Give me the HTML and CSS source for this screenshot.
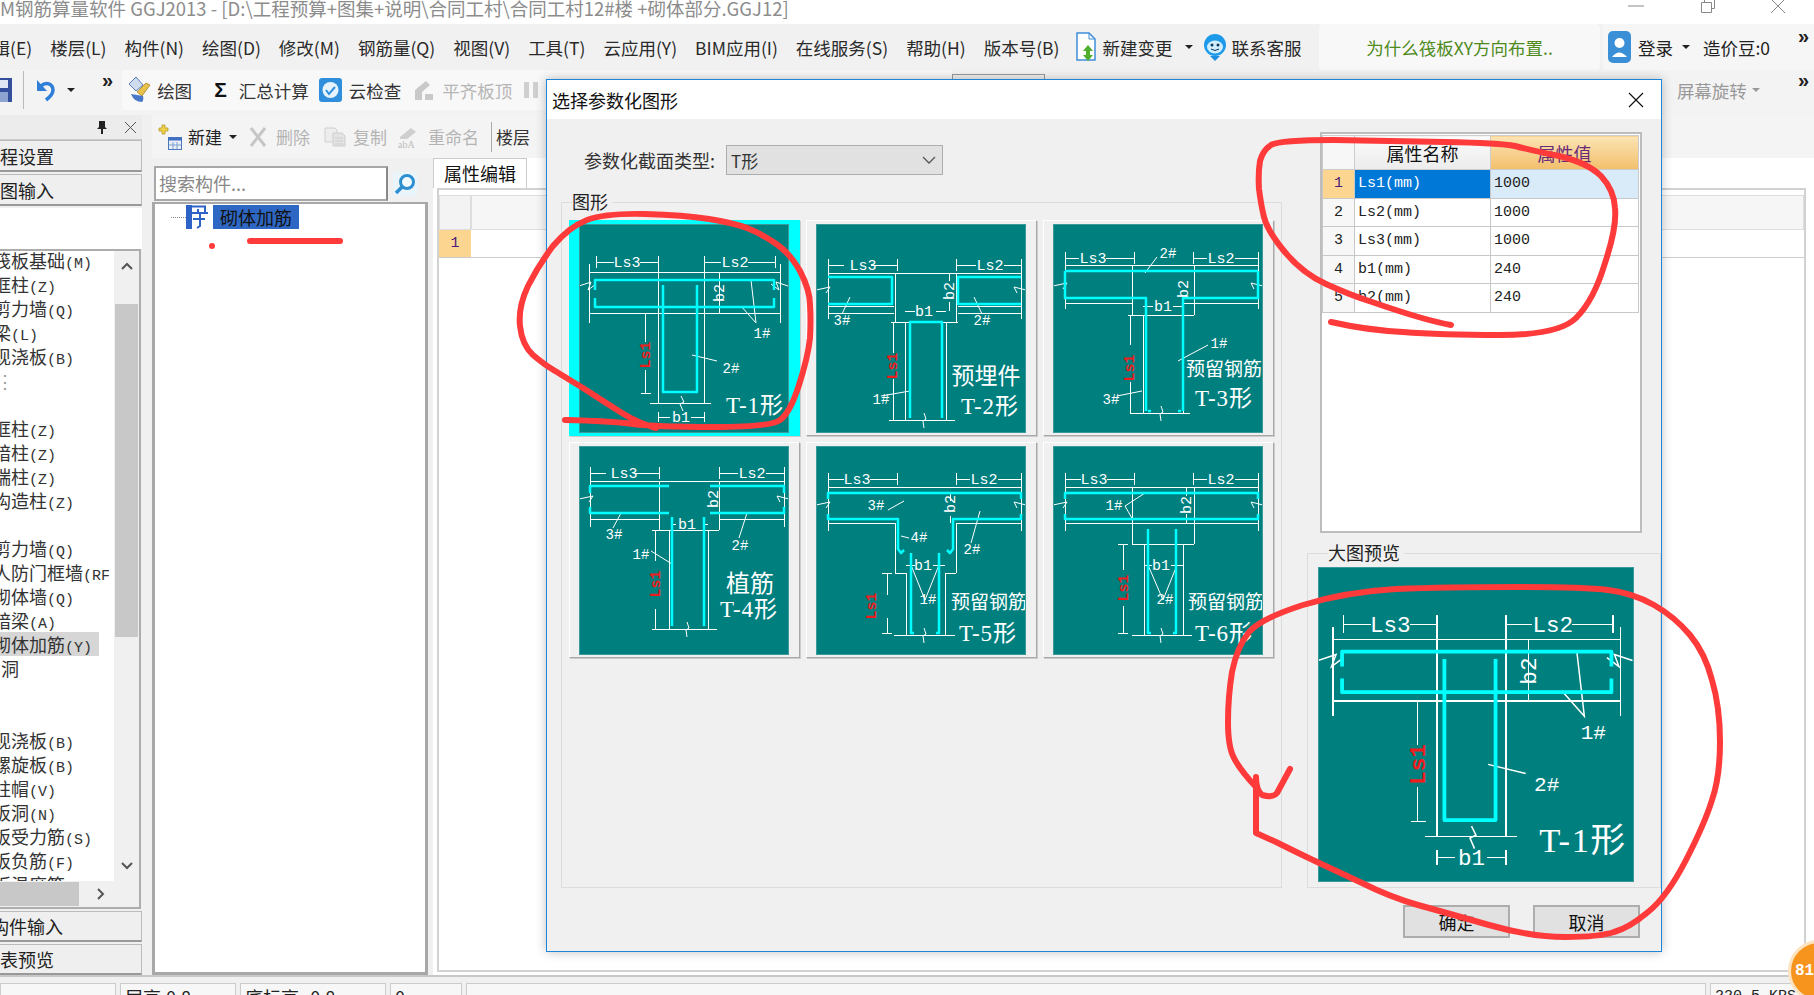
FILE: index.html
```html
<!DOCTYPE html>
<html lang="zh-CN">
<head>
<meta charset="utf-8">
<title>GGJ2013</title>
<link rel="stylesheet" href="styles.css">
</head>
<body>
<svg class="defs" width="0" height="0" aria-hidden="true">
  <defs>
    <symbol id="t1" viewBox="0 0 210 209">
      <path class="w" d="M17 32v12M79 32v12M17 38h18M61 38h18M125 32v12M196 32v12M125 38h17M169 38h27M10 40v59M201 40v59M10 48h191M10 89h191M79 38v141M125 38v141M71 179h61M140 48v41M66 89v29M66 146v23M62 169h10M79 188v10M125 188v10M79 193h12M112 193h13"/>
      <path class="d" d="M0 62l12-4-3 8 8-6M209 62l-12-4 3 8-8-6M172 56l5 43-15-17M113 131l25 6M102 172l3 6-4 2 3 7"/>
      <path class="c" d="M16 66V56H195V66M16 74V83H195V74M84 61V168H118V61"/>
      <text class="l" x="48" y="43">Ls3</text><text class="l" x="156" y="43">Ls2</text>
      <text class="l" x="102" y="198">b1</text><text class="s" x="183" y="114">1#</text><text class="s" x="152" y="149">2#</text>
      <text class="l" transform="translate(145 69) rotate(-90)">b2</text>
      <text class="r" transform="translate(71 131) rotate(-90)">Ls1</text>
      <text class="big" x="176" y="189">T-1形</text>
    </symbol>
    <symbol id="t2" viewBox="0 0 210 209">
      <path class="w" d="M12 35v12M81 35v12M12 41h16M55 41h26M140 35v12M205 35v12M140 41h20M188 41h17M12 47v48M205 47v48M12 49h193M12 89h66M142 89h63M12 82h66M142 82h63M79 49v50M140 49v50M75 98h67M89 98v98M130 98v98M73 196h66M89 87h10M120 87h10M133 49v8M133 78v9M77 99v30M77 155v41"/>
      <path class="d" d="M0 66l14-3-4 6M210 66l-12-3 3 6M108 189l2 6-3 2 1 7M65 172l29-5M26 90l8-17M166 90l-8-17"/>
      <path class="c" d="M12 53H76V80H12M205 53H142V80H205M94 194V98H126V194"/>
      <text class="l" x="47" y="46">Ls3</text><text class="l" x="174" y="46">Ls2</text><text class="l" x="108" y="92">b1</text>
      <text class="s" x="26" y="101">3#</text><text class="s" x="166" y="101">2#</text><text class="s" x="65" y="180">1#</text>
      <text class="l" transform="translate(138 67) rotate(-90)">b2</text>
      <text class="r" transform="translate(81 142) rotate(-90)">Ls1</text>
      <text class="cn" x="170" y="160">预埋件</text><text class="big" x="174" y="190">T-2形</text>
    </symbol>
    <symbol id="t3" viewBox="0 0 210 209">
      <path class="w" d="M12 28v12M81 28v12M12 34h14M53 34h28M140 28v12M205 28v12M140 34h14M182 34h23M12 38v47M205 38v47M12 41h193M12 79h67M130 79h75M79 41v50M141 41v50M75 91h66M90 91v98M130 91v98M77 189h60M90 82h10M120 82h10M77 91v30M77 158v31"/>
      <path class="d" d="M0 62l14-3-4 6M210 62l-12-3 3 6M108 182l2 6-3 2 1 7M92 49l12-16M125 137l30-16M64 172l25-5"/>
      <path class="c" d="M12 47H205M12 47V74H93V187M205 47V74H130V187M95 187H98M125 187H128"/>
      <text class="l" x="40" y="39">Ls3</text><text class="l" x="168" y="39">Ls2</text><text class="l" x="110" y="87">b1</text>
      <text class="s" x="115" y="34">2#</text><text class="s" x="166" y="124">1#</text><text class="s" x="58" y="180">3#</text>
      <text class="l" transform="translate(135 65) rotate(-90)">b2</text>
      <text class="r" transform="translate(81 144) rotate(-90)">Ls1</text>
      <text class="cn2" x="171" y="152">预留钢筋</text><text class="big" x="171" y="182">T-3形</text>
    </symbol>
    <symbol id="t4" viewBox="0 0 210 209">
      <path class="w" d="M11 21v12M80 21v12M11 27h16M55 27h25M140 21v12M205 21v12M140 27h19M187 27h18M11 33v48M205 33v48M11 35h194M11 73h69M140 73h65M80 35v49M140 35v49M73 84h67M90 84v99M129 84v99M73 183h65M92 78h5M124 78h5M76 85v30M76 163v20"/>
      <path class="d" d="M0 53l14-3-4 6M210 53l-12-3 3 6M108 176l2 6-3 2 1 7M34 82l8-15M160 92l8-25M72 105l21 13"/>
      <path class="c" d="M11 47V40H90M11 61V67H90M205 47V40H131M205 61V67H131M93 71V180M125 71V180"/>
      <text class="l" x="45" y="32">Ls3</text><text class="l" x="173" y="32">Ls2</text><text class="l" x="108" y="83">b1</text>
      <text class="s" x="35" y="93">3#</text><text class="s" x="161" y="104">2#</text><text class="s" x="62" y="113">1#</text>
      <text class="l" transform="translate(139 53) rotate(-90)">b2</text>
      <text class="r" transform="translate(81 138) rotate(-90)">Ls1</text>
      <text class="cn3" x="171" y="146">植筋</text><text class="big" x="170" y="171">T-4形</text>
    </symbol>
    <symbol id="t5" viewBox="0 0 210 209">
      <path class="w" d="M12 27v12M81 27v12M12 33h16M54 33h27M140 27v12M205 27v12M140 33h14M182 33h23M12 37v48M205 37v48M12 41h193M12 77h67M140 77h65M79 77v50M140 77v50M79 127h11M129 127h11M90 127v62M129 127v62M78 189h61M66 127h10M71 127v22M71 172v15M66 187h10M90 119h9M117 119h12M134 47v8M134 70v7"/>
      <path class="d" d="M109 154l-14-35M109 154l14-35M72 64l16-9M0 59l14-3-4 6M210 59l-12-3 3 6M108 182l2 6-3 2 1 7M85 90l8 2M155 97l9-32"/>
      <path class="c" d="M12 53V47H205V53M12 68V73H82V103l3 4 3-3M205 68V73H137V103l-3 4-3-3M95 107V187H98M123 107V187H120"/>
      <text class="l" x="41" y="38">Ls3</text><text class="l" x="168" y="38">Ls2</text><text class="l" x="107" y="124">b1</text>
      <text class="s" x="60" y="64">3#</text><text class="s" x="103" y="96">4#</text><text class="s" x="156" y="108">2#</text><text class="s" x="112" y="158">1#</text>
      <text class="l" transform="translate(139 58) rotate(-90)">b2</text>
      <text class="r" transform="translate(60 160) rotate(-90)">Ls1</text>
      <text class="cn2" x="173" y="163">预留钢筋</text><text class="big" x="172" y="195">T-5形</text>
    </symbol>
    <symbol id="t6" viewBox="0 0 210 209">
      <path class="w" d="M12 27v12M81 27v12M12 33h16M54 33h27M140 27v12M205 27v12M140 33h14M182 33h23M12 37v48M205 37v48M12 41h193M12 77h193M79 41v57M141 41v57M79 98h62M91 98v91M130 98v91M79 189h60M65 98h10M70 98v26M70 160v27M65 187h10M91 119h8M118 119h12M133 41v9M133 68v9"/>
      <path class="d" d="M110 154l-15-35M110 154l14-35M72 60l20-13M72 60l8 14M0 59l14-3-4 6M210 59l-12-3 3 6M108 182l2 6-3 2 1 7"/>
      <path class="c" d="M12 53V47H205V53M12 68V73H205V68M95 88V83M95 83V187H98M123 83V187H120"/>
      <text class="l" x="41" y="38">Ls3</text><text class="l" x="168" y="38">Ls2</text><text class="l" x="108" y="124">b1</text>
      <text class="s" x="61" y="64">1#</text><text class="s" x="112" y="158">2#</text>
      <text class="l" transform="translate(138 59) rotate(-90)">b2</text>
      <text class="r" transform="translate(75 142) rotate(-90)">Ls1</text>
      <text class="cn2" x="173" y="163">预留钢筋</text><text class="big" x="171" y="195">T-6形</text>
    </symbol>
  </defs>
</svg>

<div class="app">
  <header class="titlebar">
    <div class="title-text">M钢筋算量软件 GGJ2013 - [D:\工程预算+图集+说明\合同工村\合同工村12#楼 +砌体部分.GGJ12]</div>
    <div class="win-btns">
      <svg class="win-min" width="16" height="2"><path d="M0 1h16" stroke="#888"/></svg>
      <svg class="win-max" width="15" height="14"><path d="M.5 3.5h10v10H.5zM3.5 3V.5h10v9H11" fill="none" stroke="#888"/></svg>
      <svg class="win-close" width="16" height="14"><path d="M1 0l14 14M15 0L1 14" stroke="#888"/></svg>
    </div>
  </header>

  <nav class="menubar">
    <span class="m m-first">编辑(E)</span><span class="m">楼层(L)</span><span class="m">构件(N)</span><span class="m">绘图(D)</span><span class="m">修改(M)</span><span class="m">钢筋量(Q)</span><span class="m">视图(V)</span><span class="m">工具(T)</span><span class="m">云应用(Y)</span><span class="m">BIM应用(I)</span><span class="m">在线服务(S)</span><span class="m">帮助(H)</span><span class="m">版本号(B)</span>
    <span class="m m-icon m-doc">
      <svg width="23" height="30" viewBox="0 0 23 30"><path d="M2 1h12l6 6v21H2z" fill="#fff" stroke="#3f8fd8" stroke-width="1.5"/><path d="M14 1v6h6" fill="none" stroke="#3f8fd8"/><path d="M13 13l5 6h-3v4h3l-5 6-5-6h3v-4H8z" fill="#4fae2e"/></svg>
      新建变更<i class="caret"></i>
    </span>
    <span class="m m-icon">
      <svg width="24" height="30" viewBox="0 0 24 30"><path d="M7 24l5 5 5-5z" fill="#1e8fe0"/><circle cx="12" cy="13" r="11" fill="#1e9aea"/><ellipse cx="12" cy="15" rx="8" ry="6.500" fill="#cfeeff"/><circle cx="9" cy="13" r="1.500" fill="#135"/><circle cx="15" cy="13" r="1.500" fill="#135"/><path d="M8 17q4 3 8 0" fill="none" stroke="#135"/></svg>
      联系客服
    </span>
    <div class="news">为什么筏板XY方向布置..</div>
    <div class="login">
      <svg width="23" height="32" viewBox="0 0 23 32"><rect x="0" y="0" width="23" height="32" rx="5" fill="#3a8fd6"/><circle cx="11.500" cy="12" r="5" fill="#fff"/><path d="M4 26q7-9 15 0z" fill="#fff"/></svg>
      <span class="login-name">登录</span><i class="caret"></i><span class="beans">造价豆:0</span>
      <span class="chev">»</span>
    </div>
  </nav>

  <div class="toolbar">
    <div class="tb-left">
      <svg class="save" width="12" height="26" viewBox="0 0 12 26"><path d="M-8 1h20v24H-8z" fill="#34509c"/><rect x="-2" y="3" width="10" height="8" fill="#dfe7f5"/><rect x="-2" y="15" width="10" height="10" fill="#8ea4d0"/></svg>
      <span class="tb-sep"></span>
      <svg class="undo" width="20" height="26" viewBox="0 0 20 26"><path d="M2 3v11h10z" fill="#2f7fd8"/><path d="M6 9C11 4 18 7 18 13c0 4-3 7-7 10" fill="none" stroke="#2f7fd8" stroke-width="3.500"/></svg>
      <i class="caret caret-undo"></i>
      <span class="chev chev-tb">»</span>
      <div class="tb-group">
        <span class="ti"><svg width="25" height="28" viewBox="0 0 25 28"><path d="M2 8l7-7 7 8-7 6z" fill="#cfdcf0" stroke="#5a7db5"/><path d="M10 16l9-9 4 2-8 11z" fill="#e8c04a" stroke="#a07a1c" stroke-width=".7"/><path d="M4 18q3 8 11 8 2-2 1-6" fill="#4a78c8"/></svg>绘图</span>
        <span class="ti ti-sum"><b>Σ</b>汇总计算</span>
        <span class="ti ti-cloud"><svg width="23" height="24" viewBox="0 0 23 24"><rect width="23" height="24" rx="3" fill="#2f8fdc"/><circle cx="11.500" cy="12" r="8" fill="#e6f3fd"/><path d="M7 12l3 4 6-7" fill="none" stroke="#2f8fdc" stroke-width="2"/></svg>云检查</span>
        <span class="ti ti-gray"><svg width="25" height="24" viewBox="0 0 25 24"><path d="M3 22V12L14 3l4 4-8 7v8zM13 22v-6h8v6z" fill="#c9c9c9"/></svg>平齐板顶</span>
        <svg class="ti-gray-icon" width="20" height="24" viewBox="0 0 20 24"><path d="M2 4h5v16H2zM11 4h5v16h-5z" fill="#cfcfcf"/></svg>
      </div>
    </div>
    <div class="combo"></div>
    <div class="tb-right"><span class="rotate">屏幕旋转</span><i class="caret caret-gray"></i><span class="chev">»</span></div>
  </div>

  <div class="work">
    <aside class="side">
      <div class="side-head">
        <svg width="12" height="14" viewBox="0 0 12 14"><path d="M3 1h6v6l2 2H1l2-2zM5 9h2v5H5z" fill="#222"/></svg>
        <svg width="13" height="13" viewBox="0 0 13 13"><path d="M1 1l11 11M12 1L1 12" stroke="#555"/></svg>
      </div>
      <div class="side-btn">程设置</div>
      <div class="side-btn">图输入</div>
      <div class="side-gap"></div>
      <div class="list-box">
        <div class="list-main">
          <ul class="list">
            <li>筏板基础<span>(M)</span></li>
            <li>框柱<span>(Z)</span></li>
            <li>剪力墙<span>(Q)</span></li>
            <li>梁<span>(L)</span></li>
            <li>现浇板<span>(B)</span></li>
            <li class="dots">⋮</li>
            <li></li>
            <li>框柱<span>(Z)</span></li>
            <li>暗柱<span>(Z)</span></li>
            <li>端柱<span>(Z)</span></li>
            <li>构造柱<span>(Z)</span></li>
            <li></li>
            <li>剪力墙<span>(Q)</span></li>
            <li>人防门框墙<span>(RF</span></li>
            <li>砌体墙<span>(Q)</span></li>
            <li>暗梁<span>(A)</span></li>
            <li class="on">砌体加筋<span>(Y)</span></li>
            <li class="hole">洞</li>
            <li></li>
            <li></li>
            <li>现浇板<span>(B)</span></li>
            <li>螺旋板<span>(B)</span></li>
            <li>柱帽<span>(V)</span></li>
            <li>板洞<span>(N)</span></li>
            <li>板受力筋<span>(S)</span></li>
            <li>板负筋<span>(F)</span></li>
            <li>板温度筋<span>(W)</span></li>
          </ul>
          <div class="vscroll">
            <svg width="14" height="10" viewBox="0 0 14 10"><path d="M2 8l5-5 5 5" fill="none" stroke="#555" stroke-width="2"/></svg>
            <div class="vtrack"><div class="vthumb"></div></div>
            <svg width="14" height="10" viewBox="0 0 14 10"><path d="M2 2l5 5 5-5" fill="none" stroke="#555" stroke-width="2"/></svg>
          </div>
        </div>
        <div class="hscroll"><div class="hthumb"></div><svg width="10" height="14" viewBox="0 0 10 14"><path d="M2 2l5 5-5 5" fill="none" stroke="#555" stroke-width="2"/></svg></div>
      </div>
      <div class="side-btn side-btn-low side-btn-a">构件输入</div>
      <div class="side-btn side-btn-low">表预览</div>
    </aside>

    <main class="main">
      <div class="toolrow">
        <span class="tr tr-new"><svg width="24" height="26" viewBox="0 0 24 26"><path d="M4 1h3v3h3v3H7v3H4V7H1V4h3z" fill="#efd24a" stroke="#b09320" stroke-width=".7"/><rect x="10.500" y="13.500" width="13" height="12" fill="#e8eef8" stroke="#4a78c0"/><path d="M10 15h14" stroke="#3f6fc0" stroke-width="3"/><path d="M15 18v7M19 18v7M11 21h12" stroke="#7f9fd0"/></svg>新建<i class="caret"></i></span>
        <span class="tr tr-off tr-del"><svg width="18" height="20" viewBox="0 0 18 20"><path d="M2 1l14 18M16 1L2 19" stroke="#c6c6c6" stroke-width="3"/></svg>删除</span>
        <span class="tr tr-off"><svg width="23" height="20" viewBox="0 0 23 20"><path d="M1 1h10l2 2v12H1z" fill="#ededed" stroke="#d0d0d0"/><path d="M9 6h9l3 3v10H9z" fill="#e4e4e4" stroke="#ccc"/><path d="M11 11h8M11 14h8M11 17h8" stroke="#ccc"/></svg>复制</span>
        <span class="tr tr-off"><svg class="rename" width="25" height="24" viewBox="0 0 25 24"><path d="M3 12L14 3l5 4-9 7H3z" fill="#cfcfcf"/><text x="1" y="23">abA</text></svg>重命名</span>
        <span class="tr-sep"></span>
        <span class="tr tr-floor">楼层</span>
      </div>
      <div class="split">
        <section class="mid">
          <div class="search">
            <div class="search-box">搜索构件...</div>
            <svg width="24" height="24" viewBox="0 0 24 24"><rect width="24" height="24" fill="#eaf4fb"/><circle cx="14" cy="10" r="6.500" fill="#f4fbff" stroke="#2e8fd0" stroke-width="3"/><path d="M9 15l-6 6" stroke="#2e8fd0" stroke-width="3.500"/></svg>
          </div>
          <div class="tree">
            <div class="tree-row">
              <span class="tree-dots"></span>
              <svg width="22" height="24" viewBox="0 0 22 24"><rect x="0" y="0" width="6" height="24" fill="#2f62c6"/><path d="M3 1.500h16v6M6 8h16M12 4v3M14 8v13l-3 2M7 14h12" stroke="#2f62c6" stroke-width="2" fill="none"/></svg>
              <span class="tree-label">砌体加筋</span>
            </div>
          </div>
        </section>
        <section class="props">
          <div class="tabs"><div class="tab">属性编辑</div></div>
          <div class="props-panel">
            <div class="grid-head"><span class="gh0"></span><span class="gh1"></span></div>
            <div class="grid-row"><span class="gr0">1</span></div>
          </div>
        </section>
      </div>
    </main>
  </div>

  <footer class="status">
    <span class="st st1"></span><span class="st st2">层高:0.8m</span><span class="st st3">底标高:-0.8m</span><span class="st st4">0</span><span class="st st5"></span><span class="st st6">220.5 KPS</span>
  </footer>

  <section class="dialog">
    <div class="dlg-title"><span>选择参数化图形</span>
      <svg width="16" height="16" viewBox="0 0 16 16"><path d="M1 1l14 14M15 1L1 15" stroke="#111" stroke-width="1.200"/></svg>
    </div>
    <div class="dlg-body">
      <div class="dlg-left">
        <div class="form-row">
          <label>参数化截面类型:</label>
          <div class="select"><span>T形</span><svg width="14" height="9" viewBox="0 0 14 9"><path d="M1 1l6 6 6-6" fill="none" stroke="#555" stroke-width="1.300"/></svg></div>
        </div>
        <div class="group group-shapes">
          <div class="legend">图形</div>
          <div class="cards">
            <div class="card sel"><svg class="pic"><use href="#t1"/></svg></div>
            <div class="card"><svg class="pic"><use href="#t2"/></svg></div>
            <div class="card"><svg class="pic"><use href="#t3"/></svg></div>
            <div class="card"><svg class="pic"><use href="#t4"/></svg></div>
            <div class="card"><svg class="pic"><use href="#t5"/></svg></div>
            <div class="card"><svg class="pic"><use href="#t6"/></svg></div>
          </div>
        </div>
      </div>
      <div class="dlg-right">
        <div class="ptable-box">
          <table class="ptable">
            <thead><tr><th class="c0"></th><th class="c1">属性名称</th><th class="c2">属性值</th></tr></thead>
            <tbody>
              <tr class="cur"><td class="c0">1</td><td class="c1">Ls1(mm)</td><td class="c2">1000</td></tr>
              <tr><td class="c0">2</td><td class="c1">Ls2(mm)</td><td class="c2">1000</td></tr>
              <tr><td class="c0">3</td><td class="c1">Ls3(mm)</td><td class="c2">1000</td></tr>
              <tr><td class="c0">4</td><td class="c1">b1(mm)</td><td class="c2">240</td></tr>
              <tr><td class="c0">5</td><td class="c1">b2(mm)</td><td class="c2">240</td></tr>
            </tbody>
          </table>
        </div>
        <div class="group group-preview">
          <div class="legend">大图预览</div>
          <svg class="pic pic-big"><use href="#t1"/></svg>
        </div>
      </div>
    </div>
    <div class="dlg-foot"><button class="btn">确定</button><button class="btn">取消</button></div>
  </section>

  <div class="badge">81</div>

  <svg class="ink" width="1814" height="995" viewBox="0 0 1814 995" aria-hidden="true">
    <path d="M250 241H340"/>
    <circle cx="212" cy="246" r="3"/>
    <path d="M565 420Q610 421 633 424Q656 427 713 427Q771 427 780 420Q790 413 799 385Q808 357 810 338Q811 320 810 305Q810 290 800 271Q790 253 775 243Q760 233 747 228Q734 223 709 219Q684 215 645 214Q606 213 587 220Q569 227 553 246Q538 266 528 286Q518 307 520 326Q522 345 533 355Q545 365 552 369Q560 374 583 388Q606 403 622 413Q638 423 656 428"/>
    <path d="M1331 322Q1366 330 1403 332Q1440 335 1500 335Q1559 335 1576 318Q1594 300 1605 263Q1617 227 1615 208Q1614 190 1601 176Q1588 163 1559 156Q1530 150 1515 146Q1500 143 1445 142Q1390 141 1334 140Q1279 140 1271 145Q1263 150 1260 161Q1258 173 1259 189Q1261 205 1264 217Q1267 230 1284 251Q1302 273 1326 284Q1350 295 1372 302Q1395 310 1415 316Q1435 322 1451 325"/>
    <path d="M1290 769L1277 793Q1273 798 1262 795Q1256 790 1256 777L1256 833 1276 842Q1296 852 1315 861Q1334 870 1362 883Q1390 897 1418 905Q1447 913 1489 925Q1531 937 1565 937Q1599 937 1614 932Q1629 928 1648 912Q1667 897 1686 860Q1705 823 1712 800Q1720 777 1720 742Q1720 707 1712 680Q1705 653 1690 635Q1675 617 1654 605Q1633 593 1608 590Q1584 587 1515 587Q1447 587 1396 589Q1345 592 1303 605Q1262 618 1249 632Q1237 647 1232 672Q1228 697 1228 722Q1228 747 1234 758Q1240 770 1256 787"/>
  </svg>
</div>
</body>
</html>
```
FILE: styles.css
```css
* { box-sizing: border-box; }
html, body { margin: 0; padding: 0; }
body { font-family: "Noto Sans CJK SC", "Liberation Sans", sans-serif; color: #222; overflow: hidden; }
.defs { position: absolute; }
.app { width: 1814px; height: 995px; position: relative; overflow: hidden; display: flex; flex-direction: column; background: #f0f0f0; }

.titlebar { height: 24px; flex: none; background: #fff; display: flex; justify-content: space-between; overflow: hidden; }
.title-text { font-size: 18.500px; line-height: 16px; color: #8c8c8c; white-space: nowrap; }
.win-btns { position: relative; display: flex; align-items: flex-start; padding-right: 28px; }
.win-min { margin-top: 5px; margin-right: 57px; }
.win-max { margin-right: 54px; margin-top: -1px; }
.win-close { margin-top: -1px; }

.menubar { height: 46px; flex: none; background: #f1f1f1; display: flex; align-items: center; font-size: 17.500px; white-space: nowrap; }
.m { margin-right: 18px; color: #2a2a2a; }
.m-first { margin-left: -25px; }
.m-icon { display: flex; align-items: center; gap: 5px; margin-right: 10px; }
.m-doc { margin-left: -3px; }
.caret { display: inline-block; width: 0; height: 0; border: 4px solid transparent; border-top: 4px solid #222; border-bottom: 0; }
.m-icon .caret { margin-left: 7px; }
.news { width: 281px; height: 46px; margin-left: auto; background: #f8f8f8; border-radius: 4px; color: #4e8a1c; display: flex; align-items: center; justify-content: center; }
.login { width: 211px; flex: none; display: flex; align-items: center; margin-left: 3px; height: 46px; padding-left: 5px; background: #f6f6f6; position: relative; }
.login-name { margin-left: 7px; }
.login .caret { margin-left: 9px; }
.beans { margin-left: 13px; }
.chev { font-size: 20px; font-weight: 700; line-height: 1; color: #222; font-family: "Liberation Sans", sans-serif; }
.login .chev { position: absolute; right: 5px; top: 2px; }

.toolbar { height: 45px; flex: none; display: flex; align-items: flex-start; background: #f3f3f3; font-size: 17.500px; position: relative; }
.tb-left { width: 952px; flex: none; height: 45px; display: flex; align-items: center; padding-bottom: 5px; }
.save { flex: none; }
.tb-sep { width: 1px; height: 38px; background: #bbb; margin-left: 11px; }
.undo { margin-left: 11px; flex: none; }
.caret-undo { margin-left: 12px; }
.chev-tb { margin-left: 27px; margin-top: -20px; }
.tb-group { display: flex; align-items: center; height: 40px; margin-left: 9px; background: #f8f8f8; padding-left: 5px; flex: 1; overflow: hidden; }
.ti { display: flex; align-items: center; gap: 5px; margin-right: 22px; color: #333; white-space: nowrap; flex: none; }
.ti-sum { gap: 12px; margin-right: 10px; }
.ti-sum b { font-size: 21px; font-family: "Liberation Sans", sans-serif; color: #111; }
.ti-cloud { gap: 7px; margin-right: 11px; }
.ti-gray { color: #b5b5b5; margin-right: 10px; }
.ti-gray-icon { flex: none; }
.combo { width: 93px; height: 40px; border: 1px solid #999; background: #f0f0f0; margin-top: 4px; }
.tb-right { margin-left: auto; height: 45px; display: flex; align-items: center; padding: 0 5px 5px 0; color: #999; }
.caret-gray { border-top-color: #999; margin-left: 5px; margin-right: 38px; }
.tb-right .chev { margin-top: -20px; }

.work { flex: 1; min-height: 0; display: flex; }
.side { width: 152px; flex: none; display: flex; flex-direction: column; font-size: 18px; }
.side-head { height: 25px; flex: none; display: flex; justify-content: flex-end; align-items: center; gap: 16px; padding-right: 5px; background: #ececec; border-bottom: 1px solid #ccc; width: 142px; }
.side-btn { width: 142px; height: 32px; flex: none; margin-bottom: 2px; background: #efefef; border: 1px solid #bbb; border-bottom: 2px solid #999; border-left: 0; display: flex; align-items: center; line-height: 1; overflow: hidden; }
.side-gap { flex: none; height: 41px; background: #fff; width: 142px; }
.list-box { width: 141px; height: 660px; flex: none; border: 2px solid #adadad; border-left: 0; background: #f0f0f0; display: flex; flex-direction: column; }
.list-main { flex: 1; min-height: 0; display: flex; background: #fff; }
.list { list-style: none; margin: -3px 0 0; padding: 0; flex: 1; min-width: 0; overflow: hidden; font-size: 18px; line-height: 24px; white-space: nowrap; }
.list li { height: 24px; text-indent: -7px; color: #333; }
.list li span { font-family: "Liberation Mono", monospace; font-size: 15px; }
.list li.on { background: #d6d6d6; width: 99px; }
.list li.hole { text-indent: 1px; }
.list li.dots { text-indent: -4px; color: #999; }
.vscroll { width: 25px; flex: none; background: #f0f0f0; display: flex; flex-direction: column; align-items: center; padding-top: 10px; padding-bottom: 10px; }
.vtrack { flex: 1; width: 100%; padding-top: 33px; }
.vthumb { height: 333px; background: #c8c8c8; width: 23px; margin-left: 1px; }
.hscroll { height: 26px; flex: none; display: flex; align-items: center; background: #f0f0f0; }
.hthumb { width: 79px; height: 24px; background: #c8c8c8; margin-right: 17px; }
.side-btn-low { margin-bottom: 0; margin-top: 2px; height: 31px; }
.side-btn-a { text-indent: -9px; }

.main { flex: 1; min-width: 0; display: flex; flex-direction: column; }
.toolrow { height: 43px; flex: none; display: flex; align-items: center; padding-left: 6px; font-size: 17px; background: #f4f4f4; white-space: nowrap; }
.tr { display: flex; align-items: center; gap: 6px; margin-right: 10px; }
.tr-new .caret { margin-left: 1px; }
.tr-new { margin-right: 12px; }
.tr-off { color: #b4b4b4; }
.tr-del { gap: 9px; margin-right: 14px; }
.rename text { font: 10px "Liberation Serif", serif; fill: #bdbdbd; }
.tr-sep { width: 1px; height: 30px; background: #aaa; margin-left: 2px; margin-right: 4px; }
.tr-floor { color: #333; }
.split { flex: 1; min-height: 0; display: flex; }
.mid { width: 276px; flex: none; display: flex; flex-direction: column; padding-top: 7px; }
.search { display: flex; align-items: center; height: 37px; flex: none; gap: 5px; padding-left: 2px; }
.search-box { width: 234px; height: 35px; background: #fff; border: 2px solid #a8a8a8; border-right-color: #888; font-size: 18px; color: #888; padding-left: 3px; line-height: 30px; }
.tree { flex: 1; background: #fff; border: 3px solid #a8a8a8; border-top-width: 2px; }
.tree-row { display: flex; align-items: center; height: 24px; padding-left: 16px; margin-top: 1px; }
.tree-dots { width: 15px; border-top: 1px dotted #888; }
.tree-row svg { flex: none; }
.tree-label { margin-left: 5px; background: #2f68c4; color: #111; font-size: 18px; line-height: 24px; padding: 0 7px; width: 86px; white-space: nowrap; }

.props { flex: 1; min-width: 0; display: flex; flex-direction: column; margin-left: 5px; background: #fff; }
.tabs { height: 30px; flex: none; background: #fff; }
.tab { width: 94px; height: 30px; background: #fff; border: 1px solid #ccc; border-bottom: 0; font-size: 18px; text-align: center; line-height: 28px; color: #111; }
.props-panel { flex: 1; margin: 0 8px 3px 4px; border: 2px solid #d2d2d2; padding-top: 5px; background: #fff; }
.grid-head { display: flex; height: 35px; }
.gh0 { width: 32px; background: #f3f3f3; border: 1px solid #ddd; }
.gh1 { flex: 1; background: #f6f6f6; border: 1px solid #ddd; }
.grid-row { display: flex; height: 28px; border-bottom: 1px solid #ccc; }
.gr0 { width: 32px; background: #fcd690; text-align: center; font: 15px/28px "Liberation Mono", monospace; color: #4b1a7a; }

.status { height: 20px; flex: none; display: flex; gap: 4px; padding-top: 6px; background: #f0f0f0; border-top: 2px solid #c8c8c8; overflow: hidden; font-size: 18px; }
.st { height: 30px; background: #f7f7f7; border: 1px solid #ccc; padding: 0 4px; line-height: 26px; white-space: nowrap; flex: none; }
.st1 { width: 116px; }
.st2 { width: 116px; }
.st3 { width: 146px; }
.st4 { width: 72px; }
.st5 { width: 1240px; }
.st6 { width: 90px; font-family: "Liberation Mono", monospace; font-size: 15px; }

.dialog { position: absolute; left: 546px; top: 79px; width: 1116px; height: 873px; background: #f0f0f0; border: 1px solid #1e86d8; box-shadow: 0 0 10px rgba(0,0,0,.25); display: flex; flex-direction: column; }
.dlg-title { height: 39px; flex: none; background: #fff; display: flex; justify-content: space-between; align-items: center; padding: 0 17px 0 5px; font-size: 18px; color: #111; }
.dlg-body { flex: 1; min-height: 0; display: flex; gap: 25px; padding-left: 14px; }
.dlg-left { width: 721px; flex: none; }
.form-row { height: 30px; margin-top: 26px; display: flex; align-items: center; padding-left: 23px; font-size: 18px; color: #333; }
.form-row label { width: 142px; flex: none; white-space: nowrap; }
.select { width: 217px; height: 30px; background: #e1e1e1; border: 1px solid #adadad; display: flex; justify-content: space-between; align-items: center; padding: 0 6px 0 4px; font-size: 17px; }
.group { border: 1px solid #dcdcdc; position: relative; }
.legend { font-size: 18px; line-height: 22px; height: 22px; margin-top: -13px; color: #222; }
.group-shapes { height: 686px; margin-top: 27px; padding: 0 0 0 7px; }
.group-shapes .legend { margin-left: 3px; width: 40px; background: #f0f0f0; margin-bottom: 8px; }
.cards { display: grid; grid-template-columns: repeat(3, 231px); grid-auto-rows: 216px; gap: 6px; }
.card { padding: 3px 9px 4px 9px; background: #f0f0f0; border: 1px solid; border-color: #fff #a8a8a8 #a8a8a8 #fff; box-shadow: 1px 1px 0 #ccc; }
.card.sel { background: #00ffff; border-color: #00ffff; }
.pic { display: block; width: 210px; height: 209px; background: #007f7f; outline: 1px solid #3a9a9a; outline-offset: -1px; }
.w { fill: none; stroke: #fff; stroke-width: 1; shape-rendering: crispEdges; }
.d { fill: none; stroke: #fff; stroke-width: 1; }
.c { fill: none; stroke: #00ffff; stroke-width: 2.500; stroke-linejoin: round; }
.l { font: 15px "Liberation Mono", monospace; fill: #fff; text-anchor: middle; }
.s { font: 14px "Liberation Mono", monospace; fill: #fff; text-anchor: middle; }
.r { font: 700 15px "Liberation Mono", monospace; fill: #ee1c1c; text-anchor: middle; }
.big { font: 23px "Liberation Serif", "Noto Sans CJK SC", serif; letter-spacing: 1px; fill: #fff; text-anchor: middle; }
.cn { font: 23px "Noto Sans CJK SC", sans-serif; fill: #fff; text-anchor: middle; }
.cn2 { font: 19px "Noto Sans CJK SC", sans-serif; fill: #fff; text-anchor: middle; }
.cn3 { font: 24px "Noto Sans CJK SC", sans-serif; fill: #fff; text-anchor: middle; }

.dlg-right { width: 354px; flex: none; }
.ptable-box { margin: 13px 0 0 13px; width: 322px; height: 401px; background: #fff; border: 2px solid #bdbdbd; }
.ptable { border-collapse: collapse; width: 317px; table-layout: fixed; margin-top: 1px; }
.ptable th { height: 34px; font-weight: 400; font-size: 18px; background: linear-gradient(#fbfbfb, #ececec); border: 1px solid #ccc; color: #111; }
.ptable th.c2 { background: linear-gradient(#fbe4b4, #f2bf6b); color: #6a2a7a; }
.ptable td { height: 28.500px; border: 1px solid #c8c8c8; font: 15px "Liberation Mono", monospace; padding: 0 3px; color: #222; }
.ptable .c0 { width: 32px; background: #f7f7f7; text-align: center; padding: 0; }
.ptable .c1 { width: 136px; }
.ptable .cur .c0 { background: #fcd690; color: #4b1a7a; }
.ptable .cur .c1 { background: #0078d7; color: #fff; }
.ptable .cur .c2 { background: #d9eaf8; }
.group-preview { height: 335px; margin-top: 20px; padding-left: 10px; }
.group-preview .legend { width: 76px; background: #f0f0f0; margin-left: 10px; margin-bottom: 4px; }
.pic-big { width: 316px; height: 315px; }

.dlg-foot { height: 63px; flex: none; display: flex; justify-content: flex-end; gap: 23px; padding: 17px 21px 13px 0; }
.btn { width: 107px; height: 33px; background: #e1e1e1; border: 2px solid #adadad; font: 18px "Noto Sans CJK SC", sans-serif; color: #111; padding: 0; }

.badge { position: absolute; left: 1788px; top: 940px; width: 62px; height: 62px; border-radius: 50%; background: #f7941d; border: 3px solid #fde3c0; color: #fff; font: 700 16px/56px "Liberation Mono", monospace; padding-left: 4px; }
.ink { position: absolute; left: 0; top: 0; pointer-events: none; }
.ink path { fill: none; stroke: #ff3a3a; stroke-width: 6; stroke-linejoin: round; stroke-linecap: round; }
.ink circle { fill: #ff3a3a; }
```
